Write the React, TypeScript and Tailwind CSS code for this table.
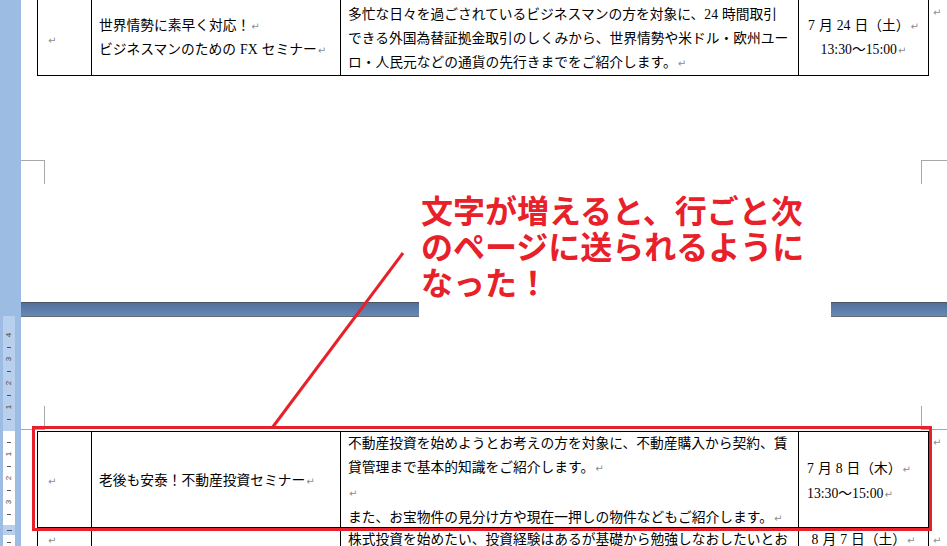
import React from "react"

const Ret = () => (
  <span className="ml-[1px] text-[10px] text-[#8c8c8c] font-['DejaVu_Sans',sans-serif]">↵</span>
)

const Tick = () => (
  <div className="h-[12px] flex items-center justify-center">
    <div className="w-[4px] h-px bg-[#555]" />
  </div>
)

const Num = ({ n }: { n: string }) => (
  <div className="h-[12px] flex items-center justify-center">
    <span className="-rotate-90 text-[8px] leading-none text-[#444] font-['Liberation_Sans',sans-serif]">{n}</span>
  </div>
)

function Ruler() {
  return (
    <div className="w-[21px] shrink-0 bg-[#9DBCE3] flex flex-col">
      <div className="h-[316px] shrink-0" />
      <div className="ml-[3px] w-[12px] h-[115px] shrink-0 bg-[#B9CFEE] pt-[13px] flex flex-col">
        <Num n="4" />
        <Tick />
        <Num n="3" />
        <Tick />
        <Num n="2" />
        <Tick />
        <Num n="1" />
        <Tick />
      </div>
      <div className="ml-[3px] w-[12px] h-[94px] shrink-0 bg-white pt-[5px] flex flex-col">
        <Tick />
        <Num n="1" />
        <Tick />
        <Num n="2" />
        <Tick />
        <Num n="3" />
        <Tick />
      </div>
      <div className="ml-[3px] w-[12px] h-[10px] shrink-0 bg-[#B9CFEE] flex items-center justify-center">
        <div className="w-[5px] h-px bg-[#555]" />
      </div>
      <div className="ml-[3px] w-[12px] flex-1 bg-white pt-[1px]">
        <Tick />
      </div>
    </div>
  )
}

const cell = "border-l border-black"
const sp = <span className="inline-block w-[4px]" />

export default function App() {
  return (
    <div className="relative flex w-[947px] h-[546px] overflow-hidden bg-white text-black font-['Liberation_Serif','Noto_Sans_CJK_JP',sans-serif] text-[13.75px]">
      <Ruler />

      <div className="flex-1 min-h-0 flex flex-col">
        {/* page 1 (bottom) */}
        <div className="h-[302px] shrink-0 flex flex-col">
          <div className="flex items-start ml-[16px]">
            <div className="grid grid-cols-[54px_249px_458px_131px] h-[76px] border-b border-black">
              <div className={`${cell} flex items-center pl-[9px] pt-[4px]`}>
                <Ret />
              </div>
              <div className={`${cell} flex flex-col justify-center pl-[7px] leading-[23px] whitespace-nowrap`}>
                <div>世界情勢に素早く対応！<Ret /></div>
                <div>ビジネスマンのための{sp}FX{sp}セミナー<Ret /></div>
              </div>
              <div className={`${cell} pl-[7px] pt-[3px] leading-[24px] whitespace-nowrap`}>
                <div>多忙な日々を過ごされているビジネスマンの方を対象に、24{sp}時間取引</div>
                <div>できる外国為替証拠金取引のしくみから、世界情勢や米ドル・欧州ユー</div>
                <div>ロ・人民元などの通貨の先行きまでをご紹介します。<Ret /></div>
              </div>
              <div className={`${cell} border-r flex flex-col justify-center items-center leading-[23px] whitespace-nowrap`}>
                <div>7{sp}月{sp}24{sp}日（土）<Ret /></div>
                <div>13:30～15:00<Ret /></div>
              </div>
            </div>
            <div className="ml-[3px] leading-[24px]">
              <Ret />
            </div>
          </div>

          <div className="mt-[84px] flex justify-between">
            <div className="w-[24px] h-[24px] border-t border-r border-[#A8A8A8]" />
            <div className="w-[26px] h-[24px] border-t border-l border-[#A8A8A8]" />
          </div>
        </div>

        {/* gap between pages */}
        <div className="h-[15px] shrink-0 border-t border-b border-t-[#4a5565] border-b-[#676c73] bg-gradient-to-b from-[#52709a] to-[#6789b8]" />

        {/* page 2 (top) */}
        <div className="flex-1 min-h-0 overflow-hidden flex flex-col">
          <div className="mt-[89px] shrink-0 flex justify-between">
            <div className="w-[24px] h-[24px] border-b border-r border-[#A8A8A8]" />
            <div className="w-[26px] h-[24px] border-b border-l border-[#A8A8A8]" />
          </div>

          <div className="mt-[1px] shrink-0 flex items-start ml-[16px]">
            <div className="flex flex-col">
              <div className="grid grid-cols-[54px_249px_458px_131px] h-[97px] border-t border-b border-black">
                <div className={`${cell} flex items-center pl-[9px]`}>
                  <Ret />
                </div>
                <div className={`${cell} flex items-center pl-[7px] whitespace-nowrap`}>
                  老後も安泰！不動産投資セミナー<Ret />
                </div>
                <div className={`${cell} pl-[7px] leading-[24px] whitespace-nowrap`}>
                  <div>不動産投資を始めようとお考えの方を対象に、不動産購入から契約、賃</div>
                  <div>貸管理まで基本的知識をご紹介します。<Ret /></div>
                  <div><Ret /></div>
                  <div>また、お宝物件の見分け方や現在一押しの物件などもご紹介します。<Ret /></div>
                </div>
                <div className={`${cell} border-r flex flex-col justify-center pl-[8px] leading-[24px] whitespace-nowrap`}>
                  <div>7{sp}月{sp}8{sp}日（木）<Ret /></div>
                  <div>13:30～15:00<Ret /></div>
                </div>
              </div>
              <div className="grid grid-cols-[54px_249px_458px_131px] h-[40px] leading-[24px]">
                <div className={`${cell} pl-[9px]`}>
                  <Ret />
                </div>
                <div className={cell} />
                <div className={`${cell} pl-[7px] whitespace-nowrap`}>
                  株式投資を始めたい、投資経験はあるが基礎から勉強しなおしたいとお
                </div>
                <div className={`${cell} border-r text-center whitespace-nowrap`}>
                  8{sp}月{sp}7{sp}日（土）<Ret />
                </div>
              </div>
            </div>
            <div className="ml-[3px] flex flex-col leading-[24px]">
              <Ret />
              <div className="h-[74px]" />
              <Ret />
            </div>
          </div>
        </div>
      </div>

      {/* annotation */}
      <div className="absolute left-[419px] top-[191px] w-[412px] h-[128px] bg-white pl-[2px] text-[32px] leading-[36px] font-bold text-[#E8202A] font-['Noto_Sans_CJK_JP',sans-serif] whitespace-nowrap">
        <div>文字が増えると、行ごと次</div>
        <div>のページに送られるように</div>
        <div>なった！</div>
      </div>

      <svg className="absolute inset-0 pointer-events-none" width="947" height="546">
        <line x1="403" y1="253" x2="272" y2="428" stroke="#E8202A" strokeWidth="3" />
      </svg>

      <div className="absolute left-[32px] top-[426px] w-[900px] h-[105px] border-[3px] border-[#E8202A] pointer-events-none" />
    </div>
  )
}
